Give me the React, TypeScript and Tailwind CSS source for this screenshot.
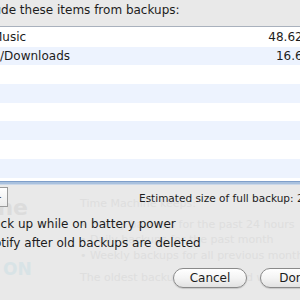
import React from "react";

const rows: { name: string; nameOffset: string; size: string }[] = [
  { name: "Music", nameOffset: "-ml-[8px]", size: "48.62 GB" },
  { name: "~/Downloads", nameOffset: "-ml-[10px]", size: "16.6 GB" },
  { name: "", nameOffset: "", size: "" },
  { name: "", nameOffset: "", size: "" },
  { name: "", nameOffset: "", size: "" },
  { name: "", nameOffset: "", size: "" },
  { name: "", nameOffset: "", size: "" },
  { name: "", nameOffset: "", size: "" },
];

const rowHeights = ["h-[20px]", "h-[18px]", "h-[19px]", "h-[19px]", "h-[18px]", "h-[19px]", "h-[19px]", "h-[19px]"];

function Ghost() {
  return (
    <div className="absolute inset-0 pointer-events-none text-[#dedede] text-[11px] leading-[13px] whitespace-nowrap">
      <div className="absolute right-[272px] top-[195px] text-[22px] leading-[26px] font-bold text-[#dcdcdc]">Time Machine</div>
      <div className="absolute left-[3px] top-[259px] text-[17px] leading-[20px] font-bold text-[#d8e3e6]">ON</div>
      <div className="absolute left-[80px] top-[197px]">Time Machine keeps:</div>
      <div className="absolute left-[80px] top-[218px]">• Hourly backups for the past 24 hours</div>
      <div className="absolute left-[80px] top-[233px]">• Daily backups for the past month</div>
      <div className="absolute left-[80px] top-[249px]">• Weekly backups for all previous months</div>
      <div className="absolute left-[80px] top-[271px]">The oldest backups are deleted when your disk becomes full.</div>
    </div>
  );
}

function Checkbox() {
  return (
    <span className="w-[14px] h-[14px] shrink-0 rounded-[3px] border border-[#8c8c8c] bg-gradient-to-b from-white to-[#e4e4e4]" />
  );
}

export default function App() {
  return (
    <div className="relative w-[300px] h-[300px] overflow-hidden bg-[#e9e9e9] font-['DejaVu_Sans',sans-serif] text-[#1c1c1c]">
      <Ghost />
      <div className="relative flex flex-col">
        <div className="h-[26px] pt-[3px] text-[12px] leading-[15px] whitespace-nowrap -ml-[31px]">
          Exclude these items from backups:
        </div>
        <div className="w-[330px] border-t border-[#a9b1bd] flex flex-col">
          {rows.map((r, i) => (
            <div
              key={i}
              className={`${rowHeights[i]} flex items-center justify-between pr-[6px] text-[12px] whitespace-nowrap ${
                i % 2 === 1 ? "bg-[#edf3fe]" : "bg-white"
              }`}
            >
              <span className={r.nameOffset}>{r.name}</span>
              <span>{r.size}</span>
            </div>
          ))}
          <div className="h-[3px] bg-white" />
          <div className="h-[1px] bg-[#7f9fca]" />
          <div className="h-[2px] bg-[#a9c1de]" />
          <div className="h-[1px] bg-[#cad7e8]" />
        </div>
        <div className="mt-[2px] h-[20px] flex items-start">
          <div className="w-[22px] h-[20px] -ml-[14px] shrink-0 border border-[#9a9a9a] bg-gradient-to-b from-white to-[#ececec] flex items-center justify-center text-[12px] leading-none text-[#444]">
            −
          </div>
          <div className="ml-[131px] mt-[5px] text-[10.5px] leading-[13px] whitespace-nowrap">
            Estimated size of full backup: 213.4 GB
          </div>
        </div>
        <label className="mt-[8px] h-[19px] flex items-center gap-[6px] -ml-[35px] text-[12px] leading-[19px] whitespace-nowrap">
          <Checkbox />
          <span>Back up while on battery power</span>
        </label>
        <label className="h-[19px] flex items-center gap-[6px] -ml-[35px] text-[12px] leading-[19px] whitespace-nowrap">
          <Checkbox />
          <span>Notify after old backups are deleted</span>
        </label>
        <div className="mt-[15px] pl-[173px] flex gap-[13px]">
          <button className="w-[74px] h-[20px] shrink-0 rounded-full border border-[#8a8a8a] bg-gradient-to-b from-white via-[#f4f4f4] to-[#e2e2e2] shadow-[0_1px_1px_rgba(0,0,0,0.15)] text-[12px] leading-[18px] text-[#1c1c1c]">
            Cancel
          </button>
          <button className="w-[70px] h-[20px] shrink-0 rounded-full border border-[#8a8a8a] bg-gradient-to-b from-white via-[#f4f4f4] to-[#e2e2e2] shadow-[0_1px_1px_rgba(0,0,0,0.15)] text-[12px] leading-[18px] text-[#1c1c1c]">
            Done
          </button>
        </div>
      </div>
    </div>
  );
}
